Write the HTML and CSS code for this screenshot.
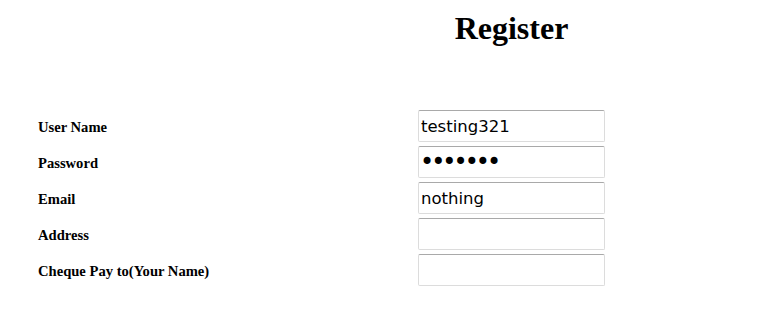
FILE: index.html
```html
<!DOCTYPE html>
<html>
<head>
<meta charset="utf-8">
<link rel="stylesheet" href="styles.css">
</head>
<body>
<div class="page">
  <div class="title-row">
    <div></div>
    <h1 class="title">Register</h1>
  </div>
  <form class="form">
    <label class="label">User Name</label>
    <input class="field" type="text" value="testing321">
    <label class="label">Password</label>
    <input class="field field-password" type="password" value="1234567">
    <label class="label">Email</label>
    <input class="field" type="text" value="nothing">
    <label class="label">Address</label>
    <input class="field" type="text" value="">
    <label class="label">Cheque Pay to(Your Name)</label>
    <input class="field" type="text" value="">
  </form>
</div>
</body>
</html>
```
FILE: styles.css
```css
html, body {
  margin: 0;
  padding: 0;
  background: #fff;
}
.page {
  padding-left: 38px;
  font-family: "Liberation Serif", "Times New Roman", serif;
  color: #000;
}
.title-row {
  display: grid;
  grid-template-columns: 380px 187px;
  padding-top: 10px;
}
.title {
  margin: 0;
  font-size: 32px;
  font-weight: bold;
  text-align: center;
  line-height: 37px;
}
.form {
  display: grid;
  grid-template-columns: 380px 187px;
  row-gap: 4px;
  margin-top: 63px;
  align-items: center;
}
.label {
  font-size: 14.6px;
  font-weight: bold;
  padding-top: 2px;
}
.field {
  box-sizing: border-box;
  width: 187px;
  height: 32px;
  margin: 0;
  padding: 0 2px;
  border: 1px solid #dcdcdc;
  border-top-color: #a9a9a9;
  border-radius: 2px;
  font-family: "DejaVu Sans", sans-serif;
  font-size: 16.5px;
  color: #000;
  background: #fff;
  outline: none;
}
.field-password {
  font-size: 24px;
  letter-spacing: -3px;
  padding-left: 1px;
}
```
